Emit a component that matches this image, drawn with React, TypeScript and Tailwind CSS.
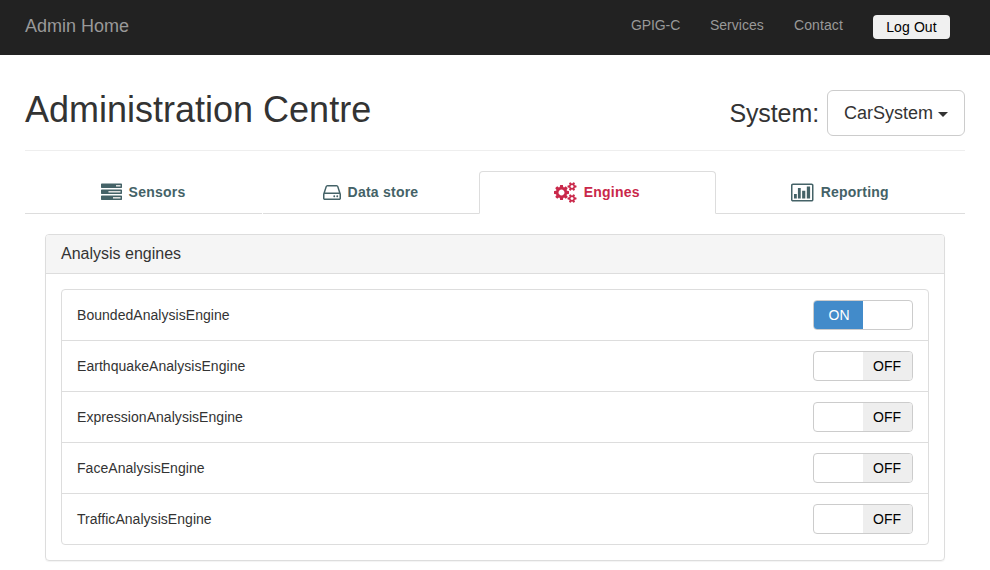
import type { ReactNode } from "react";

const engines = [
  { name: "BoundedAnalysisEngine", on: true },
  { name: "EarthquakeAnalysisEngine", on: false },
  { name: "ExpressionAnalysisEngine", on: false },
  { name: "FaceAnalysisEngine", on: false },
  { name: "TrafficAnalysisEngine", on: false },
];

function TasksIcon() {
  return (
    <svg className="mt-[2px]" width="21" height="21" viewBox="0 0 1792 1792" fill="currentColor">
      <path fill="#ddd" d="M1024 1408h640v-128h-640v128zm-384-512h1024v-128h-1024v128zm640-512h384v-128h-384v128z" />
      <path d="M1024 1408h640v-128h-640v128zm-384-512h1024v-128h-1024v128zm640-512h384v-128h-384v128zm512 832v256q0 26-19 45t-45 19h-1664q-26 0-45-19t-19-45v-256q0-26 19-45t45-19h1664q26 0 45 19t19 45zm0-512v256q0 26-19 45t-45 19h-1664q-26 0-45-19t-19-45v-256q0-26 19-45t45-19h1664q26 0 45 19t19 45zm0-512v256q0 26-19 45t-45 19h-1664q-26 0-45-19t-19-45v-256q0-26 19-45t45-19h1664q26 0 45 19t19 45z" />
    </svg>
  );
}

function DriveIcon() {
  return (
    <svg className="mt-[2px]" width="18" height="21" viewBox="128 0 1536 1792" fill="currentColor">
      <path d="M1168 1216q0 33-23.5 56.5t-56.5 23.5-56.5-23.5-23.5-56.5 23.5-56.5 56.5-23.5 56.5 23.5 23.5 56.5zm256 0q0 33-23.5 56.5t-56.5 23.5-56.5-23.5-23.5-56.5 23.5-56.5 56.5-23.5 56.5 23.5 23.5 56.5zm112 160v-320q0-13-9.5-22.5t-22.5-9.5h-1216q-13 0-22.5 9.5t-9.5 22.5v320q0 13 9.5 22.5t22.5 9.5h1216q13 0 22.5-9.5t9.5-22.5zm-1230-480h1180l-157-482q-4-13-16-21.5t-26-8.5h-782q-14 0-26 8.5t-16 21.5zm1358 160v320q0 66-47 113t-113 47h-1216q-66 0-113-47t-47-113v-320q0-25 16-75l197-606q17-53 63-86t101-33h782q55 0 101 33t63 86l197 606q16 50 16 75z" />
    </svg>
  );
}

function CogsIcon() {
  const smallCog =
    "M1920 1338v140q0 16-149 31-12 27-30 52 51 113 51 138 0 4-4 7-122 71-124 71-8 0-46-47t-52-68q-20 2-30 2t-30-2q-14 21-52 68t-46 47q-2 0-124-71-4-3-4-7 0-25 51-138-18-25-30-52-149-15-149-31v-140q0-16 149-31 13-29 30-52-51-113-51-138 0-4 4-7 4-2 35-20t59-34 30-16q8 0 46 46.5t52 67.5q20-2 30-2t30 2q51-71 92-112l6-2q4 0 124 70 4 3 4 7 0 25-51 138 17 23 30 52 149 15 149 31zM1664 1408q0-52-38-90t-90-38-90 38-38 90q0 53 37.5 90.5t90.5 37.5 90.5-37.5 37.5-90.5z";
  return (
    <svg className="mt-px" width="22.5" height="21" viewBox="0 0 1920 1792" fill="currentColor" fillRule="evenodd">
      <path d="M896 896q0-106-75-181t-181-75-181 75-75 181 75 181 181 75 181-75 75-181zM1280 805v185q0 10-7 19.5t-16 10.5l-155 24q-11 35-32 76 34 48 90 115 7 11 7 20 0 12-7 19-23 30-82.5 89.5t-78.5 59.5q-11 0-21-7l-115-90q-37 19-77 31-11 108-23 155-7 24-30 24h-186q-11 0-20-7.5t-10-17.5l-23-153q-34-10-75-31l-118 89q-7 7-20 7-11 0-21-8-144-133-144-160 0-9 7-19 10-14 41-53t47-61q-23-44-35-82l-152-24q-10-1-17-9.5t-7-19.5v-185q0-10 7-19.5t16-10.5l155-24q11-35 32-76-34-48-90-115-7-11-7-20 0-12 7-20 22-30 82-89t79-59q11 0 21 7l115 90q34-18 77-32 11-108 23-154 7-24 30-24h186q11 0 20 7.5t10 17.5l23 153q34 10 75 31l118-89q8-7 20-7 11 0 21 8 144 133 144 160 0 8-7 19-12 16-42 54t-45 60q23 48 34 82l152 23q10 2 17 10.5t7 19.5z" />
      <path d={smallCog} />
      <path d={smallCog} transform="translate(0 -1024)" />
    </svg>
  );
}

function ChartIcon() {
  return (
    <svg className="mt-[2px]" width="22.5" height="21" viewBox="0 0 1920 1792" fill="currentColor">
      <path
        fillRule="evenodd"
        d="M160 128h1600q66 0 113 47t47 113v1216q0 66-47 113t-113 47h-1600q-66 0-113-47t-47-113v-1216q0-66 47-113t113-47zM160 256q-32 0-32 32v1216q0 32 32 32h1600q32 0 32-32v-1216q0-32-32-32z"
      />
      <path d="M256 1024h240v384h-240zM590 512h240v896h-240zM950 740h270v668h-270zM1350 384h280v1024h-280z" />
    </svg>
  );
}

function Tab({ className, icon, label }: { className: string; icon: ReactNode; label: string }) {
  return (
    <a className={`flex h-[43px] items-center justify-center gap-[7px] border-b pr-px pb-px text-sm font-bold ${className}`}>
      {icon}
      <span className="tracking-[0.23px]">{label}</span>
    </a>
  );
}

function Toggle({ on }: { on: boolean }) {
  return (
    <div className="flex h-[30px] w-[100px] overflow-hidden rounded-[4px] border border-[#ccc] text-sm leading-7">
      {on ? (
        <span className="w-[49px] bg-[#428bca] pl-px text-center text-white">ON</span>
      ) : (
        <span className="ml-auto w-[49px] bg-[#eee] pr-px text-center text-black">OFF</span>
      )}
    </div>
  );
}

export default function App() {
  return (
    <div className="h-[570px] overflow-hidden bg-white font-['Liberation_Sans',Arial,sans-serif] text-sm text-[#333]">
      <nav className="flex h-[55px] items-start justify-between bg-[#222] pr-10 pl-[25px] text-[#999]">
        <a className="pt-4 text-lg leading-5">Admin Home</a>
        <div className="flex items-start">
          <div className="flex gap-[30px] pt-[15px] leading-5 whitespace-nowrap">
            <a className="w-[49px] tracking-[-0.1px]">GPIG-C</a>
            <a className="w-[54px]">Services</a>
            <a className="w-[49px] tracking-[0.1px]">Contact</a>
          </div>
          <button className="mt-[15px] ml-[30px] h-6 w-[77px] rounded-[4px] bg-[#f0f0f0] text-center leading-6 tracking-[0.1px] text-black">
            Log Out
          </button>
        </div>
      </nav>

      <main className="px-[25px]">
        <header className="flex h-24 items-start justify-between border-b border-[#eee]">
          <h1 className="pt-[35px] text-[36px] leading-10">Administration Centre</h1>
          <div className="flex items-start gap-2 pt-[35px]">
            <span className="pt-2 text-[25px] leading-[30px] tracking-[-0.1px]">System:</span>
            <button className="flex h-[46px] w-[138px] items-center justify-center gap-[5px] rounded-[6px] border border-[#ccc] text-lg leading-6">
              <span>CarSystem</span>
              <span className="mt-[3px] border-x-[5px] border-t-[5px] border-x-transparent border-t-[#333]" />
            </button>
          </div>
        </header>

        <div className="mt-5 grid grid-cols-[238px_216px_237px_249px] text-[#446267]">
          <Tab className="mr-px border-[#ddd]" icon={<TasksIcon />} label="Sensors" />
          <Tab className="border-[#ddd]" icon={<DriveIcon />} label="Data store" />
          <Tab
            className="rounded-t-[4px] border-x border-t border-x-[#ddd] border-t-[#ddd] border-b-white text-[#c9284a]"
            icon={<CogsIcon />}
            label="Engines"
          />
          <Tab className="border-[#ddd]" icon={<ChartIcon />} label="Reporting" />
        </div>

        <section className="mx-5 mt-5 rounded-[4px] border border-[#ddd] shadow-[0_1px_1px_rgba(0,0,0,0.05)]">
          <h3 className="h-[39px] rounded-t-[3px] border-b border-[#ddd] bg-[#f5f5f5] pt-[9px] pl-[15px] text-base leading-5">
            Analysis engines
          </h3>
          <div className="p-[15px]">
            <ul className="divide-y divide-[#ddd] rounded-[4px] border border-[#ddd]">
              {engines.map((engine) => (
                <li key={engine.name} className="flex h-[51px] items-center justify-between px-[15px] last:h-[50px]">
                  <span className="tracking-[0.04px]">{engine.name}</span>
                  <Toggle on={engine.on} />
                </li>
              ))}
            </ul>
          </div>
        </section>
      </main>
    </div>
  );
}
